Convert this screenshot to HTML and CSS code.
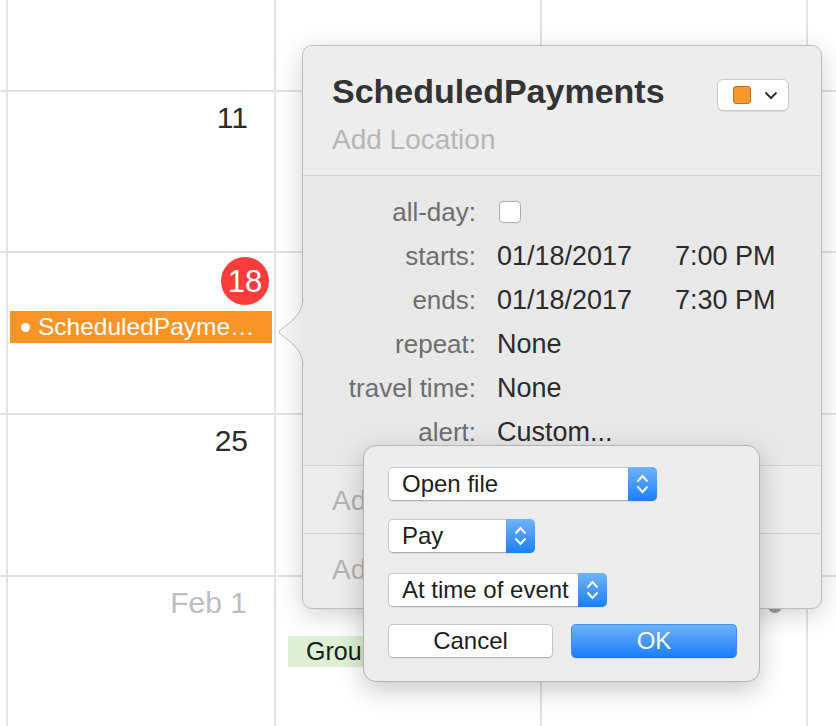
FILE: index.html
```html
<!DOCTYPE html>
<html>
<head>
<meta charset="utf-8">
<title>Calendar event</title>
<link rel="stylesheet" href="styles.css">
</head>
<body>
<div class="calendar">
  <div class="cell"></div><div class="cell"></div><div class="cell"></div><div class="cell"></div><div class="cell"></div>

  <div class="cell"></div>
  <div class="cell"><div class="daynum">11</div></div>
  <div class="cell"></div><div class="cell"></div><div class="cell"></div>

  <div class="cell"></div>
  <div class="cell">
    <div class="badge-wrap"><span class="badge">18</span></div>
    <div class="event"><span class="event-dot"></span><span class="event-text">ScheduledPayme…</span></div>
  </div>
  <div class="cell"></div><div class="cell"></div><div class="cell"></div>

  <div class="cell"></div>
  <div class="cell"><div class="daynum">25</div></div>
  <div class="cell"></div><div class="cell"></div><div class="cell"></div>

  <div class="cell"></div>
  <div class="cell"><div class="daynum muted">Feb 1</div></div>
  <div class="cell"><div class="event-green">Group Meeting</div></div>
  <div class="cell"><span class="gray-dot"></span></div>
  <div class="cell"></div>
</div>

<div class="popover">
  <svg class="arrow" width="28" height="68" viewBox="0 0 28 68">
    <defs>
      <linearGradient id="ag" x1="0" y1="0" x2="1" y2="0">
        <stop offset="0" stop-color="#f6f6f6"/>
        <stop offset="1" stop-color="#e8e8e8"/>
      </linearGradient>
    </defs>
    <path d="M28,0 L27,0 C27,14 18,22 7,30 C2,33 2,35 7,38 C18,46 27,54 27,68 L28,68 Z" fill="url(#ag)"/>
    <path d="M27,0 C27,14 18,22 7,30 C2,33 2,35 7,38 C18,46 27,54 27,68" fill="none" stroke="#b9b9b9" stroke-width="1"/>
  </svg>
  <div class="pop-head">
    <div class="title-row">
      <h1 class="title">ScheduledPayments</h1>
      <div class="color-btn">
        <span class="swatch"></span>
        <svg class="chev" width="14" height="9" viewBox="0 0 14 9"><path d="M1.5,1.5 L7,7 L12.5,1.5" fill="none" stroke="#333" stroke-width="2"/></svg>
      </div>
    </div>
    <div class="location">Add Location</div>
  </div>
  <div class="fields">
    <div class="field"><span class="label">all-day:</span><span class="checkbox"></span></div>
    <div class="field"><span class="label">starts:</span><span class="value date">01/18/2017</span><span class="value">7:00 PM</span></div>
    <div class="field"><span class="label">ends:</span><span class="value date">01/18/2017</span><span class="value">7:30 PM</span></div>
    <div class="field"><span class="label">repeat:</span><span class="value">None</span></div>
    <div class="field"><span class="label">travel time:</span><span class="value">None</span></div>
    <div class="field"><span class="label">alert:</span><span class="value">Custom...</span></div>
  </div>
  <div class="add-row">Add Invitees</div>
  <div class="add-row second">Add Notes, URL, or Attachments</div>
</div>

<div class="alert">
  <div class="select w-open">
    <span class="select-label">Open file</span>
    <span class="stepper"><svg width="29" height="34" viewBox="0 0 29 34"><path d="M9.5,14.5 L14.5,9 L19.5,14.5 M9.5,19.5 L14.5,25 L19.5,19.5" fill="none" stroke="#fff" stroke-width="2"/></svg></span>
  </div>
  <div class="select w-pay">
    <span class="select-label">Pay</span>
    <span class="stepper"><svg width="29" height="34" viewBox="0 0 29 34"><path d="M9.5,14.5 L14.5,9 L19.5,14.5 M9.5,19.5 L14.5,25 L19.5,19.5" fill="none" stroke="#fff" stroke-width="2"/></svg></span>
  </div>
  <div class="select w-time">
    <span class="select-label">At time of event</span>
    <span class="stepper"><svg width="29" height="34" viewBox="0 0 29 34"><path d="M9.5,14.5 L14.5,9 L19.5,14.5 M9.5,19.5 L14.5,25 L19.5,19.5" fill="none" stroke="#fff" stroke-width="2"/></svg></span>
  </div>
  <div class="buttons">
    <div class="btn">Cancel</div>
    <div class="btn primary">OK</div>
  </div>
</div>
</body>
</html>
```

FILE: styles.css
```css
* { box-sizing: border-box; }

body {
  margin: 0;
  width: 836px;
  height: 726px;
  overflow: hidden;
  position: relative;
  background: #fff;
  font-family: "Liberation Sans", Arial, sans-serif;
}

/* Calendar grid */
.calendar {
  display: grid;
  grid-template-columns: 6px 266px 264px 264px 1fr;
  grid-template-rows: 90px 159px 160px 160px 1fr;
  gap: 2px;
  background: #e2e2e2;
  height: 726px;
}

.cell {
  background: #fff;
  min-width: 0;
  overflow: hidden;
}

.daynum {
  text-align: right;
  padding: 11px 26px 0 0;
  font-size: 30px;
  line-height: 30px;
  color: #2a2a2a;
}

.daynum.muted { color: #bdbdbd; padding-right: 27px; }

.badge-wrap {
  display: flex;
  justify-content: flex-end;
  padding: 4px 5px 0 0;
}

.badge {
  width: 48px;
  height: 48px;
  border-radius: 50%;
  background: #fd3c3b;
  color: #fff;
  font-size: 31px;
  display: flex;
  align-items: center;
  justify-content: center;
  padding-top: 1px;
}

.event {
  margin: 6px 2px 0 2px;
  height: 32px;
  background: #fa9426;
  color: #fff;
  display: flex;
  align-items: center;
  padding-left: 11px;
  font-size: 24.5px;
  white-space: nowrap;
}

.event-dot {
  width: 9px;
  height: 9px;
  border-radius: 50%;
  background: #fff;
  margin-right: 8px;
  flex: none;
}

.event-green {
  margin: 59px 0 0 12px;
  height: 31px;
  background: #ddf0d4;
  color: #1c1c1c;
  font-size: 25px;
  line-height: 31px;
  padding-left: 18px;
  white-space: nowrap;
}

.gray-dot {
  display: block;
  width: 14px;
  height: 14px;
  border-radius: 50%;
  background: #a3a3a3;
  margin: 22px 0 0 226px;
}

/* Event popover */
.popover {
  position: absolute;
  left: 302px;
  top: 45px;
  width: 520px;
  height: 564px;
  background: #ececec;
  border: 1px solid #bdbdbd;
  border-radius: 10px;
  box-shadow: 0 6px 26px rgba(0, 0, 0, 0.18);
  display: flex;
  flex-direction: column;
}

.arrow {
  position: absolute;
  left: -27px;
  top: 252px;
}

.pop-head {
  height: 129px;
  padding: 25px 32px 0 29px;
  border-radius: 10px 10px 0 0;
  background: #ededed;
}

.title-row {
  display: flex;
  justify-content: space-between;
  align-items: flex-start;
}

.title {
  margin: 0;
  font-size: 34px;
  line-height: 40px;
  font-weight: bold;
  color: #333;
}

.color-btn {
  margin-top: 8px;
  width: 72px;
  height: 32px;
  background: #fff;
  border: 1px solid #cacaca;
  border-radius: 6px;
  box-shadow: 0 1px 1px rgba(0, 0, 0, 0.08);
  display: flex;
  align-items: center;
  padding-left: 15px;
}

.swatch {
  width: 18px;
  height: 18px;
  background: #fb982c;
  border: 1.5px solid #c26f1e;
  border-radius: 3px;
}

.chev { margin-left: 13px; }

.location {
  margin-top: 13px;
  font-size: 28px;
  line-height: 32px;
  color: #b6b6b6;
}

.fields {
  border-top: 1px solid #d2d2d2;
  background: #e8e8e8;
  padding: 14px 0 11px 0;
}

.field {
  height: 44px;
  display: flex;
  align-items: center;
}

.label {
  width: 173px;
  text-align: right;
  font-size: 26px;
  color: #6e6e6e;
  margin-right: 21px;
  flex: none;
}

.value {
  font-size: 27px;
  color: #2b2b2b;
  white-space: nowrap;
}

.value.date { width: 178px; }

.checkbox {
  width: 22px;
  height: 22px;
  margin-left: 2px;
  background: #fff;
  border: 1px solid #adadad;
  border-radius: 4px;
}

.add-row {
  height: 68px;
  border-top: 1px solid #d2d2d2;
  padding: 19px 0 0 29px;
  font-size: 28px;
  line-height: 32px;
  color: #b3b3b3;
  white-space: nowrap;
  overflow: hidden;
}

.add-row.second {
  flex: 1;
  padding-top: 20px;
}

/* Custom alert sheet */
.alert {
  position: absolute;
  left: 363px;
  top: 445px;
  width: 397px;
  height: 237px;
  background: #ececec;
  border: 1px solid #b4b4b4;
  border-radius: 13px;
  box-shadow: 0 8px 26px rgba(0, 0, 0, 0.22);
  padding: 21px 0 0 24px;
  display: flex;
  flex-direction: column;
  align-items: flex-start;
}

.select {
  height: 34px;
  display: flex;
  background: #fff;
  border: 1px solid #c6c6c6;
  border-bottom-color: #adadad;
  border-radius: 5px;
  box-shadow: 0 1px 1px rgba(0, 0, 0, 0.06);
}

.w-open { width: 269px; }
.w-pay { width: 147px; margin-top: 18px; }
.w-time { width: 219px; margin-top: 20px; }

.select-label {
  flex: 1;
  padding-left: 13px;
  font-size: 24px;
  line-height: 32px;
  color: #1d1d1d;
  white-space: nowrap;
}

.stepper {
  width: 29px;
  margin: -1px -1px -1px 0;
  height: 34px;
  border-radius: 0 5px 5px 0;
  background: linear-gradient(#6fb4fc, #1a7ffb);
  display: block;
}

.stepper svg { display: block; }

.buttons {
  margin-top: 17px;
  display: flex;
  gap: 18px;
}

.btn {
  width: 165px;
  height: 34px;
  background: #fff;
  border: 1px solid #c6c6c6;
  border-bottom-color: #adadad;
  border-radius: 5px;
  box-shadow: 0 1px 1px rgba(0, 0, 0, 0.06);
  font-size: 24px;
  line-height: 32px;
  text-align: center;
  color: #1d1d1d;
}

.btn.primary {
  width: 166px;
  background: linear-gradient(#6cb2fb, #1a7ffb);
  border-color: #3d8ef3;
  border-bottom-color: #1f6fd8;
  color: #fff;
}
```
